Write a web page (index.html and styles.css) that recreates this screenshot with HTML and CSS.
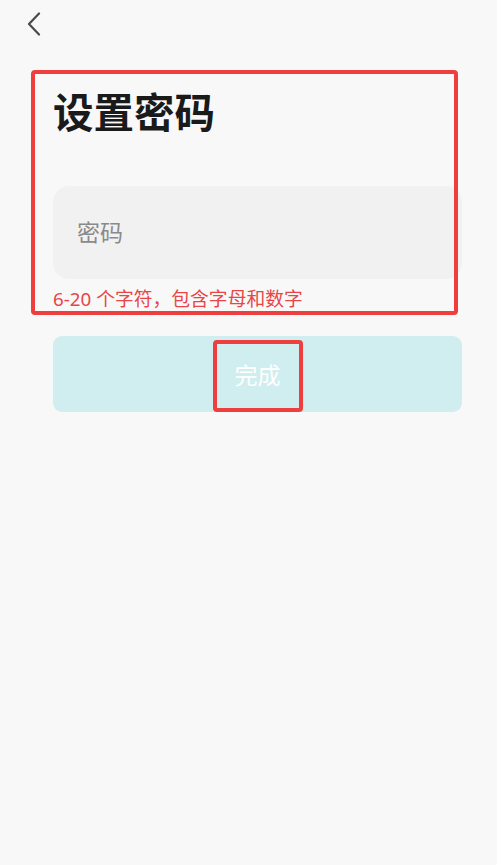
FILE: index.html
```html
<!DOCTYPE html>
<html lang="zh-CN">
<head>
<meta charset="utf-8">
<title>设置密码</title>
<link rel="stylesheet" href="styles.css">
</head>
<body>
<div class="page">
  <header class="topbar">
    <button class="back" aria-label="返回">
      <svg width="14" height="24" viewBox="0 0 14 24" fill="none">
        <path d="M12 1.5 L2 12 L12 22.5" stroke="#4a4a4a" stroke-width="2.2" stroke-linecap="round" stroke-linejoin="round"/>
      </svg>
    </button>
  </header>
  <main class="content">
    <section class="field-box">
      <h1 class="title">设置密码</h1>
      <div class="input-wrap">
        <input class="input" type="password" placeholder="密码">
      </div>
      <p class="hint">6-20 个字符，包含字母和数字</p>
    </section>
    <button class="submit"><span class="submit-label">完成</span></button>
  </main>
</div>
</body>
</html>
```
FILE: styles.css
```css
* { box-sizing: border-box; }
html, body { margin: 0; padding: 0; }
body {
  background: #f8f8f8;
  font-family: "Noto Sans", "Noto Sans CJK SC", sans-serif;
  width: 497px;
  height: 865px;
  overflow: hidden;
}
.page { display: flex; flex-direction: column; }
.topbar {
  height: 70px;
  padding: 12px 0 0 27px;
}
.back {
  border: 0;
  background: none;
  padding: 0;
  width: 14px;
  height: 24px;
  display: block;
}
.back svg { display: block; }
.content {
  display: flex;
  flex-direction: column;
  padding-left: 53px;
  width: 462px;
}
.field-box {
  position: relative;
  margin-left: -22px;
  width: 427px;
  padding: 21px 0 0 22px;
  height: 245px;
}
.field-box::after {
  content: "";
  position: absolute;
  inset: 0;
  border: 4px solid #ee3e3e;
  border-radius: 4px;
  pointer-events: none;
}
.title {
  margin: 0;
  font-size: 40.5px;
  line-height: 40px;
  font-weight: 700;
  color: #1a1a1a;
  font-family: "Noto Sans CJK SC", sans-serif;
}
.input-wrap {
  margin-top: 55px;
  width: 409px;
}
.input {
  display: block;
  width: 409px;
  height: 93px;
  border: 0;
  border-radius: 16px;
  background: #f1f1f1;
  padding: 0 24px 3px;
  font-size: 23px;
  font-family: "Noto Sans CJK SC", sans-serif;
  color: #333;
  outline: none;
}
.input::placeholder { color: #8a8a8a; }
.hint {
  margin: 9px 0 0;
  font-size: 18.8px;
  line-height: 22px;
  color: #e84646;
  white-space: nowrap;
}
.submit {
  margin-top: 21px;
  width: 409px;
  height: 76px;
  border: 0;
  border-radius: 9px;
  background: #d0eef0;
  padding: 4px 0 0;
  display: flex;
  justify-content: center;
  align-items: stretch;
}
.submit-label {
  width: 90px;
  height: 72px;
  border: 4px solid #ee3e3e;
  border-radius: 4px;
  display: flex;
  align-items: center;
  justify-content: center;
  color: #ffffff;
  font-size: 23px;
  font-family: "Noto Sans CJK SC", sans-serif;
  padding-bottom: 4px;
}
```
